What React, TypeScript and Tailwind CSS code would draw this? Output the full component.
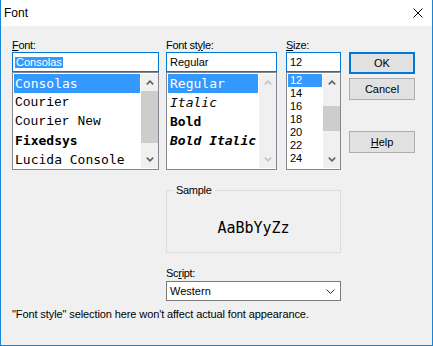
import React from "react"

const ui = "font-['Liberation_Sans',Arial,sans-serif]"
const mono = "font-['DejaVu_Sans_Mono',monospace]"
const courier = "font-['Liberation_Mono',monospace]"

function Arrow({ up, on }: { up?: boolean; on: boolean }) {
  return (
    <div className="flex h-[17px] items-center justify-center">
      <svg width="8" height="5" viewBox="0 0 8 5">
        <polyline
          points={up ? "0.8,4.4 4,1.2 7.2,4.4" : "0.8,0.6 4,3.8 7.2,0.6"}
          fill="none"
          stroke={on ? "#606060" : "#c2c2c2"}
          strokeWidth="1.6"
        />
      </svg>
    </div>
  )
}

function ScrollBar({ on, offset, thumb }: { on: boolean; offset?: number; thumb?: number }) {
  return (
    <div className="flex w-[17px] flex-col bg-[#f0f0f0]">
      <Arrow up on={on} />
      <div className="flex-1">
        {thumb ? (
          <div className="bg-[#cdcdcd]" style={{ marginTop: offset, height: thumb }} />
        ) : null}
      </div>
      <Arrow on={on} />
    </div>
  )
}

function Label({ children }: { children: React.ReactNode }) {
  return <div className={`h-[14px] text-[11px] leading-[14px] tracking-[-0.3px] text-black ${ui}`}>{children}</div>
}

function Input({ children }: { children: React.ReactNode }) {
  return (
    <div className={`flex h-[20px] items-center border border-[#0078d7] bg-white pl-[2px] text-[11px] text-black ${ui}`}>
      {children}
    </div>
  )
}

const fonts = [
  { name: "Consolas", cls: mono },
  { name: "Courier", cls: courier },
  { name: "Courier New", cls: courier },
  { name: "Fixedsys", cls: `${mono} font-bold` },
  { name: "Lucida Console", cls: mono },
]

const styles = [
  { name: "Regular", cls: "" },
  { name: "Italic", cls: "italic" },
  { name: "Bold", cls: "font-bold" },
  { name: "Bold Italic", cls: "font-bold italic" },
]

const sizes = ["12", "14", "16", "18", "20", "22", "24"]

function Button({ children, def }: { children: React.ReactNode; def?: boolean }) {
  return (
    <div
      className={`flex h-[22px] w-[66px] items-center justify-center bg-[#e1e1e1] text-[11px] text-black ${ui} ${
        def ? "border-2 border-[#0078d7]" : "border border-[#adadad]"
      }`}
    >
      {children}
    </div>
  )
}

export default function App() {
  return (
    <div className="flex h-[346px] w-[433px] flex-col border-x border-b border-[#1883d7] bg-white">
      <div className="flex h-[26px] items-center justify-between pl-[3px] pr-[9px]">
        <span className={`text-[12px] text-black ${ui}`}>Font</span>
        <svg width="10" height="10" viewBox="0 0 10 10">
          <path d="M0.5 0.5 L9.5 9.5 M9.5 0.5 L0.5 9.5" stroke="#000" strokeWidth="1" />
        </svg>
      </div>

      <div className="flex-1 bg-[#f0f0f0] pl-[11px] pt-[12px]">
        <div className="flex">
          {/* font */}
          <div className="w-[147px]">
            <Label>
              <span className="underline">F</span>ont:
            </Label>
            <Input>
              <span className="bg-[#3399ff] px-[1px] leading-[11px] text-white">Consolas</span>
            </Input>
            <div className="flex h-[98px] border border-[#828790] bg-white p-[1px] pr-0">
              <div className="flex-1 pr-[1px]">
                {fonts.map((f, i) => (
                  <div
                    key={f.name}
                    className={`h-[19px] pl-[1px] text-[13px] leading-[19px] ${f.cls} ${
                      i === 0 ? "bg-[#3399ff] text-white" : "text-black"
                    }`}
                  >
                    {f.name}
                  </div>
                ))}
              </div>
              <ScrollBar on thumb={52} offset={0} />
            </div>
          </div>

          {/* style */}
          <div className="ml-[7px] w-[111px]">
            <Label>
              Font st<span className="underline">y</span>le:
            </Label>
            <Input>
              <span className="pl-[1px]">Regular</span>
            </Input>
            <div className="flex h-[98px] border border-[#828790] bg-white p-[1px] pr-0">
              <div className="flex-1 pr-[1px]">
                {styles.map((s, i) => (
                  <div
                    key={s.name}
                    className={`h-[19px] pl-[2px] text-[13px] leading-[19px] ${mono} ${s.cls} ${
                      i === 0 ? "bg-[#3399ff] text-white" : "text-black"
                    }`}
                  >
                    {s.name}
                  </div>
                ))}
              </div>
              <ScrollBar on={false} />
            </div>
          </div>

          {/* size */}
          <div className="ml-[9px] w-[55px]">
            <Label>
              <span className="underline">S</span>ize:
            </Label>
            <Input>
              <span className="pl-[1px]">12</span>
            </Input>
            <div className="flex h-[98px] border border-[#828790] bg-white p-[1px] pr-0">
              <div className="flex-1 pr-[1px]">
                {sizes.map((s, i) => (
                  <div
                    key={s}
                    className={`h-[13px] pl-[2px] text-[11px] leading-[13px] ${ui} ${
                      i === 0 ? "bg-[#3399ff] text-white" : "text-black"
                    }`}
                  >
                    {s}
                  </div>
                ))}
              </div>
              <ScrollBar on thumb={25} offset={15} />
            </div>
          </div>

          {/* buttons */}
          <div className="ml-[8px] flex flex-col pt-[14px]">
            <Button def>OK</Button>
            <div className="mt-[4px]">
              <Button>Cancel</Button>
            </div>
            <div className="mt-[31px]">
              <Button>
                <span>
                  <span className="underline">H</span>elp
                </span>
              </Button>
            </div>
          </div>
        </div>

        <div className="ml-[154px] mt-[14px] w-[175px]">
          <fieldset className="h-[69px] border border-[#dcdcdc] px-[6px]">
            <legend className={`px-[3px] text-[11px] leading-[13px] tracking-[-0.3px] text-black ${ui}`}>Sample</legend>
            <div className={`pt-[22px] text-center text-[15px] leading-[18px] text-black ${mono}`}>AaBbYyZz</div>
          </fieldset>
          <div className="mt-[13px]">
            <Label>
              Sc<span className="underline">r</span>ipt:
            </Label>
          </div>
          <div
            className={`mt-[1px] flex h-[20px] items-center justify-between border border-[#7a7a7a] bg-white pl-[3px] pr-[5px] text-[11px] text-black ${ui}`}
          >
            <span>Western</span>
            <svg width="9" height="5" viewBox="0 0 9 5">
              <polyline points="0.5,0.5 4.5,4.5 8.5,0.5" fill="none" stroke="#333" strokeWidth="1" />
            </svg>
          </div>
        </div>

        <div className={`mt-[6px] text-[11px] leading-[14px] tracking-[-0.1px] text-black ${ui}`}>
          "Font style" selection here won't affect actual font appearance.
        </div>
      </div>
    </div>
  )
}
